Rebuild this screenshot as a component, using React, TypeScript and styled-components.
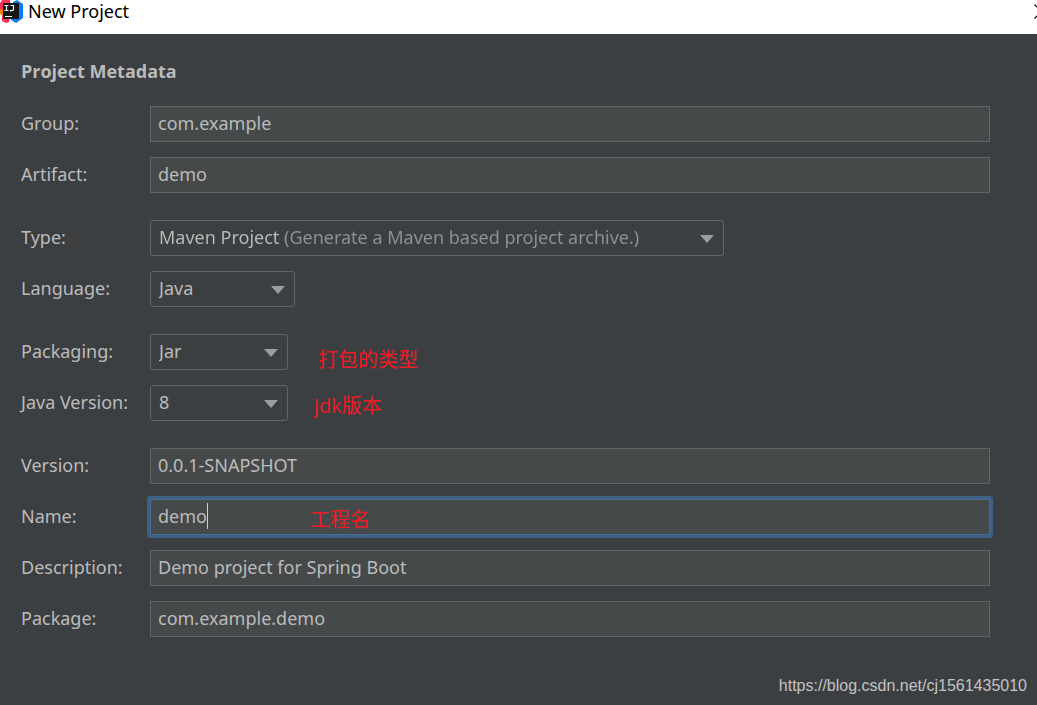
import React from 'react';
import styled, { createGlobalStyle, css } from 'styled-components';

const GlobalStyle = createGlobalStyle`
  * { box-sizing: border-box; }
  body {
    margin: 0;
    background: #3c3f41;
    font-family: "Noto Sans", "Open Sans", "Noto Sans CJK SC", sans-serif;
    font-size: 18px;
    line-height: 24px;
    color: #bbbbbb;
  }
`;

const Dialog = styled.div`
  min-height: 100vh;
  display: flex;
  flex-direction: column;
  background: #3c3f41;
`;

const TitleBar = styled.header`
  height: 34px;
  flex: none;
  display: flex;
  justify-content: space-between;
  align-items: flex-start;
  background: #ffffff;
  color: #000000;
  overflow: hidden;
`;

const TitleGroup = styled.div`
  display: flex;
  gap: 4px;
`;

const Title = styled.h1`
  margin: 0;
  font-size: 18px;
  font-weight: 400;
  line-height: 22px;
`;

const CloseButton = styled.button`
  margin: 4px -12px 0 0;
  padding: 0;
  border: 0;
  background: none;
  line-height: 0;
`;

const Form = styled.form`
  flex: 1;
  padding: 24px 47px 0 21px;
`;

const Heading = styled.h2`
  margin: 0 0 22px;
  font-family: "Open Sans", "Noto Sans", sans-serif;
  font-size: 18px;
  line-height: 26px;
  font-weight: 700;
`;

const Group = styled.div`
  display: grid;
  gap: 15px;
  margin-bottom: 27px;
`;

const Row = styled.div`
  display: grid;
  grid-template-columns: 129px 1fr;
  align-items: center;
`;

const Label = styled.label`
  padding-bottom: 2px;
  white-space: nowrap;
`;

const Cell = styled.div`
  position: relative;
  display: flex;
  align-items: center;
`;

const TextInput = styled.input<{ $active?: boolean }>`
  width: 100%;
  height: 36px;
  padding: 0 7px 2px;
  border: 1px solid #646464;
  border-radius: 0;
  outline: none;
  background: #45494a;
  color: #bbbbbb;
  font: inherit;
  ${(p) =>
    p.$active &&
    css`
      border-color: #466d94;
      box-shadow: 0 0 0 3px #3d6185;
      border-radius: 1px;
    `}
`;

const Caret = styled.span`
  position: absolute;
  left: 57px;
  top: 4px;
  width: 1px;
  height: 26px;
  background: #d0d0d0;
`;

const Combo = styled.div<{ $width: number }>`
  position: relative;
  width: ${(p) => p.$width}px;
  height: 36px;
  border: 1px solid #646464;
  border-radius: 3px;
`;

const Select = styled.select<{ $mutedFrom?: number }>`
  appearance: none;
  width: 100%;
  height: 34px;
  padding: 0 30px 2px 8px;
  border: 0;
  outline: none;
  background: transparent;
  color: #bbbbbb;
  font: inherit;
  ${(p) =>
    p.$mutedFrom &&
    css`
      background: linear-gradient(to right, #bbbbbb ${p.$mutedFrom}px, #8f9192 ${p.$mutedFrom}px);
      background-clip: text;
      -webkit-background-clip: text;
      -webkit-text-fill-color: transparent;
    `}
`;

const Arrow = styled.svg`
  position: absolute;
  right: 9px;
  top: 14px;
  pointer-events: none;
`;

const Note = styled.span<{ $left: number; $top: number }>`
  position: absolute;
  left: ${(p) => p.$left}px;
  top: ${(p) => p.$top}px;
  color: #ed1c24;
  font-family: "Open Sans", "Noto Sans CJK SC", sans-serif;
  font-size: 20px;
  line-height: 28px;
  font-weight: 400;
  white-space: nowrap;
  pointer-events: none;
`;

const Footer = styled.footer`
  display: flex;
  justify-content: flex-end;
  padding: 0 10px 8px;
`;

const Link = styled.a`
  font-family: "Liberation Sans", Arial, sans-serif;
  font-size: 16px;
  line-height: 22px;
  color: #c2c3c4;
  text-decoration: none;
`;

const Logo = () => (
  <svg width="24" height="24" viewBox="0 0 24 24" aria-hidden="true">
    <path d="M2 0H10L11 12L9 22L6 23L2 21L2 15L0 13V3Z" fill="#fe315d" />
    <path d="M0 9L4 10L4 17L0 14Z" fill="#f97a12" />
    <path d="M13 2L17 0L23 4V18L16 23L11 20L13 10Z" fill="#087cfa" />
    <rect x="3" y="3" width="16" height="16" fill="#161616" />
    <path d="M4.5 5.5H8.5M6.5 5.5V10.5M4.5 10.5H8.5M10.5 5.5H13.5V9Q13.5 10.6 12 10.6H10" fill="none" stroke="#fff" strokeWidth="1.2" />
    <path d="M5 16.5H12" stroke="#fff" strokeWidth="1" />
  </svg>
);

type FieldProps = { id: string; label: string; value: string; active?: boolean; children?: React.ReactNode };

const Field = ({ id, label, value, active, children }: FieldProps) => (
  <Row>
    <Label htmlFor={id}>{label}</Label>
    <Cell>
      <TextInput id={id} type="text" defaultValue={value} $active={active} spellCheck={false} />
      {children}
    </Cell>
  </Row>
);

type ChoiceProps = { id: string; label: string; value: string; width: number; mutedFrom?: number; children?: React.ReactNode };

const Choice = ({ id, label, value, width, mutedFrom, children }: ChoiceProps) => (
  <Row>
    <Label htmlFor={id}>{label}</Label>
    <Cell>
      <Combo $width={width}>
        <Select id={id} $mutedFrom={mutedFrom}>
          <option>{value}</option>
        </Select>
        <Arrow width="14" height="8" viewBox="0 0 14 8" aria-hidden="true">
          <path d="M0 0H14L7 8Z" fill="#9a9da1" />
        </Arrow>
      </Combo>
      {children}
    </Cell>
  </Row>
);

export default function App() {
  return (
    <Dialog>
      <GlobalStyle />
      <TitleBar>
        <TitleGroup>
          <Logo />
          <Title>New Project</Title>
        </TitleGroup>
        <CloseButton type="button" aria-label="Close">
          <svg width="15" height="15" viewBox="0 0 15 15">
            <path d="M0.5 0.5L14.5 14.5M14.5 0.5L0.5 14.5" stroke="#000" strokeWidth="1.2" />
          </svg>
        </CloseButton>
      </TitleBar>
      <Form>
        <Heading>Project Metadata</Heading>
        <Group>
          <Field id="group" label="Group:" value="com.example" />
          <Field id="artifact" label="Artifact:" value="demo" />
        </Group>
        <Group>
          <Choice
            id="type"
            label="Type:"
            value="Maven Project (Generate a Maven based project archive.)"
            width={574}
            mutedFrom={134}
          />
          <Choice id="language" label="Language:" value="Java" width={145} />
        </Group>
        <Group>
          <Choice id="packaging" label="Packaging:" value="Jar" width={138}>
            <Note $left={168} $top={12}>打包的类型</Note>
          </Choice>
          <Choice id="java-version" label="Java Version:" value="8" width={138}>
            <Note $left={164} $top={7}>jdk版本</Note>
          </Choice>
        </Group>
        <Group>
          <Field id="version" label="Version:" value="0.0.1-SNAPSHOT" />
          <Field id="name" label="Name:" value="demo" active>
            <Caret />
            <Note $left={160} $top={7}>工程名</Note>
          </Field>
          <Field id="description" label="Description:" value="Demo project for Spring Boot" />
          <Field id="package" label="Package:" value="com.example.demo" />
        </Group>
      </Form>
      <Footer>
        <Link href="https://blog.csdn.net/cj1561435010">https://blog.csdn.net/cj1561435010</Link>
      </Footer>
    </Dialog>
  );
}
